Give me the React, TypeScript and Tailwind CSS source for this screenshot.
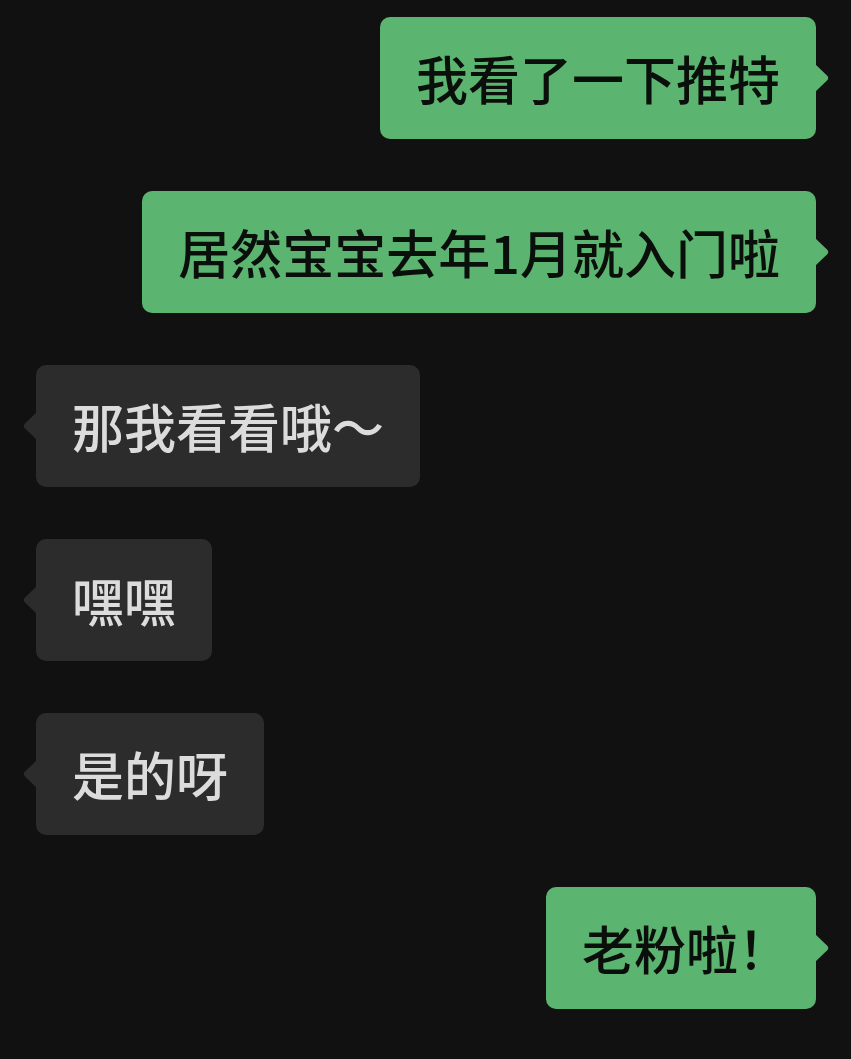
const messages = [
  { side: 'right', text: '我看了一下推特' },
  { side: 'right', text: '居然宝宝去年1月就入门啦' },
  { side: 'left', text: '那我看看哦～' },
  { side: 'left', text: '嘿嘿' },
  { side: 'left', text: '是的呀' },
  { side: 'right', text: '老粉啦', tail: '！' },
]

const Tail = ({ side, color }: { side: string; color: string }) =>
  side === 'right' ? (
    <svg
      className="absolute top-1/2 -right-[14px] -mt-[14px]"
      width="15"
      height="28"
      viewBox="0 0 15 28"
    >
      <path d="M0 0 L12 11.5 Q14.5 14 12 16.5 L0 28 Z" fill={color} />
    </svg>
  ) : (
    <svg
      className="absolute top-1/2 -left-[14px] -mt-[14px]"
      width="15"
      height="28"
      viewBox="0 0 15 28"
    >
      <path d="M15 0 L3 11.5 Q0.5 14 3 16.5 L15 28 Z" fill={color} />
    </svg>
  )

const Bubble = ({ side, text, tail }: { side: string; text: string; tail?: string }) => {
  const mine = side === 'right'
  return (
    <div className={`flex ${mine ? 'justify-end' : 'justify-start'}`}>
      <div
        className={`relative h-[122px] flex items-center rounded-[10px] px-[36px] text-[52px] font-medium leading-none ${
          mine ? 'bg-[#5bb46f] text-[#0b0f0b]' : 'bg-[#2c2c2c] text-[#dcdcdc]'
        }`}
      >
        <span className="whitespace-nowrap">
          {text}
          {tail && <span className="inline-block w-[42px]">{tail}</span>}
        </span>
        <Tail side={side} color={mine ? '#5bb46f' : '#2c2c2c'} />
      </div>
    </div>
  )
}

export default function App() {
  return (
    <div
      className="min-h-[1059px] w-full bg-[#111111] pt-[17px] pl-[36px] pr-[35px] flex flex-col gap-[52px]"
      style={{ fontFamily: '"Noto Sans CJK SC", "Noto Sans", sans-serif' }}
    >
      {messages.map((m, i) => (
        <Bubble key={i} side={m.side} text={m.text} tail={m.tail} />
      ))}
    </div>
  )
}
